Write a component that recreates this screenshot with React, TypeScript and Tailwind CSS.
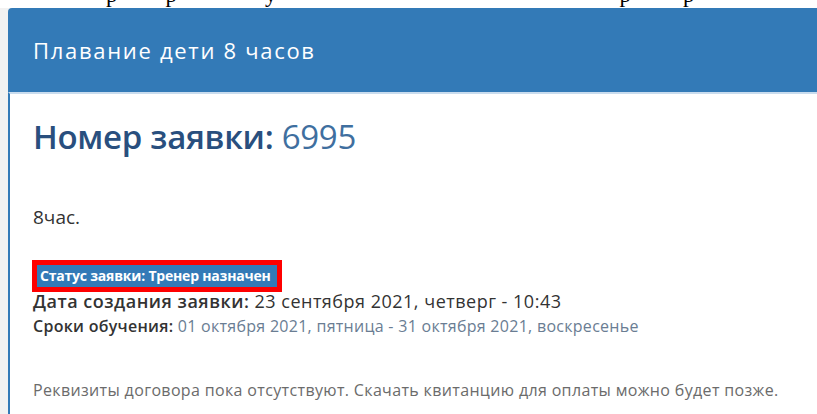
import React from "react";

const sans = { fontFamily: '"Open Sans", "Noto Sans", Arial, sans-serif' };

function CaptionTail() {
  // bottom edge of a line of document text running above the panel
  const marks: { ch: string; ml: string }[] = [
    { ch: "р", ml: "ml-[106px]" },
    { ch: "р", ml: "ml-[48px]" },
    { ch: "у", ml: "ml-[88px]" },
    { ch: "р", ml: "ml-[343px]" },
    { ch: "р", ml: "ml-[52px]" },
  ];
  return (
    <div className="h-[8px] overflow-hidden bg-white">
      <div
        className="flex -mt-[17px] text-[23px] leading-[24px] text-black"
        style={{ fontFamily: '"Liberation Serif", "Times New Roman", serif' }}
      >
        {marks.map((m, i) => (
          <span key={i} className={m.ml}>
            {m.ch}
          </span>
        ))}
      </div>
    </div>
  );
}

export default function App() {
  return (
    <div className="w-[817px] h-[414px] overflow-hidden bg-[#f2f2f2]" style={sans}>
      <CaptionTail />
      <div className="ml-[8px] flex flex-col h-[406px]">
        <div className="h-[84px] bg-[#337ab7] rounded-tl-[4px] flex items-center pl-[25px]">
          <span className="text-white text-[22px] tracking-[1.7px]">Плавание дети 8 часов</span>
        </div>
        <div className="flex-1 bg-white border-l-[2px] border-t-[2px] border-[#337ab7] border-t-[#c9dcee] pl-[23px]">
          <h1 className="mt-[23px] text-[33px] leading-[40px] text-[#294f7e] tracking-[-0.3px]">
            <span className="font-semibold">Номер заявки:</span> <span className="text-[#3f6f9f]">6995</span>
          </h1>
          <p className="mt-[48px] text-[19px] leading-[24px] text-[#333]">8час.</p>
          <div className="mt-[31px] inline-block border-[5px] border-[#ff0000] -ml-[1px]">
            <span className="block bg-[#337ab7] text-white text-[14px] font-bold leading-[22px] px-[3px] tracking-[-0.2px] w-[240px] whitespace-nowrap">
              Статус заявки: Тренер назначен
            </span>
          </div>
          <p className="text-[18px] leading-[18px] text-[#333] tracking-[0.5px]">
            <span className="font-semibold">Дата создания заявки:</span> 23 сентября 2021, четверг - 10:43
          </p>
          <p className="mt-[6px] text-[16px] leading-[20px] text-[#333] tracking-[0.28px]">
            <span className="font-semibold">Сроки обучения:</span>{" "}
            <span className="text-[#6a7d93]">01 октября 2021, пятница - 31 октября 2021, воскресенье</span>
          </p>
          <p className="mt-[44px] text-[16px] leading-[20px] text-[#6b6b6b] tracking-[0.35px]">
            Реквизиты договора пока отсутствуют. Скачать квитанцию для оплаты можно будет позже.
          </p>
        </div>
      </div>
    </div>
  );
}
